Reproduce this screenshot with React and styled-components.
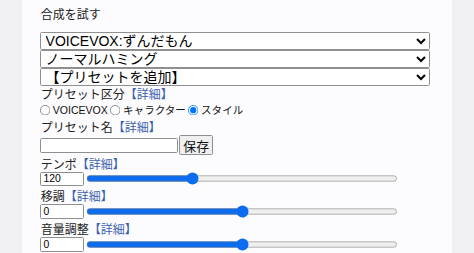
import React, { useState } from "react";
import styled, { createGlobalStyle } from "styled-components";

const Global = createGlobalStyle`
  html, body {
    margin: 0;
    padding: 0;
    background: #f0f0f2;
    font-family: "Noto Sans CJK JP", "Liberation Sans", sans-serif;
  }
`;

// everything below is written at 125% and scaled down, like a zoomed-out page
const Page = styled.div`
  zoom: 0.8;
  display: flex;
  padding: 0 27px;
  height: 320px;
  overflow: hidden;
`;

const Panel = styled.div`
  width: 538px;
  background: #fcfcfe;
  padding: 9px 0 0 23px;
  box-sizing: border-box;
  color: #222;
`;

const Title = styled.div`
  font-size: 15px;
  line-height: 18px;
  padding-left: 1px;
  margin-bottom: 13px;
`;

const Select = styled.select`
  display: block;
  width: 488px;
  height: 22.5px;
  margin: 0;
  font-size: 17.5px;
  font-family: "Liberation Sans", "Noto Sans CJK JP", sans-serif;
  color: #000;
  background: #fff;
  border: 1px solid #8f8f8f;
  border-radius: 2px;
  padding: 0 2px;
`;

const Label = styled.div`
  font-size: 15px;
  line-height: 20px;
  padding-left: 1px;
`;

const Detail = styled.a`
  color: #3c5fae;
  text-decoration: none;
`;

const RadioRow = styled.div`
  display: flex;
  align-items: center;
  gap: 3px;
  font-size: 13.2px;
  font-family: "Liberation Sans", "Noto Sans CJK JP", sans-serif;
  line-height: 21px;
  color: #111;
`;

const RadioLabel = styled.label`
  display: flex;
  align-items: center;
  white-space: nowrap;
  input {
    flex: none;
    margin: 0 2px 0 0;
    width: 14px;
    height: 14px;
  }
`;

const Row = styled.div`
  display: flex;
  align-items: center;
  box-sizing: border-box;
  height: ${(p) => p.$h}px;
  padding-bottom: ${(p) => p.$pb || 0}px;
`;

const TextInput = styled.input`
  width: 173px;
  height: 19px;
  box-sizing: border-box;
  margin: 0;
  border: 1px solid #8f8f8f;
  border-radius: 2px;
  background: #fff;
`;

const Button = styled.button`
  height: 25px;
  margin: 0 0 0 1px;
  padding: 0 4px;
  font-size: 16px;
  font-family: "Noto Sans CJK JP", sans-serif;
  border: 1px solid #8f8f8f;
  border-radius: 2px;
  background: #efefef;
  color: #111;
`;

const NumInput = styled.input`
  width: 55px;
  height: 18px;
  box-sizing: border-box;
  margin: 0;
  padding: 0 3px;
  font-size: 13px;
  font-family: "Liberation Sans", sans-serif;
  border: 1px solid #8f8f8f;
  border-radius: 2px;
  background: #fff;
`;

const Range = styled.input`
  width: 390px;
  margin: 0 0 0 3px;
  accent-color: #0b6cf0;
`;

function Slider({ label, value, min, max }) {
  const [v, setV] = useState(value);
  return (
    <>
      <Label>
        {label}
        <Detail href="#">【詳細】</Detail>
      </Label>
      <Row $h={21} $pb={3}>
        <NumInput type="text" value={v} onChange={(e) => setV(e.target.value)} />
        <Range type="range" min={min} max={max} value={v} onChange={(e) => setV(e.target.value)} />
      </Row>
    </>
  );
}

export default function App() {
  return (
    <>
      <Global />
      <Page>
        <Panel>
          <Title>合成を試す</Title>
          <Select defaultValue="zundamon">
            <option value="zundamon">VOICEVOX:ずんだもん</option>
          </Select>
          <Select defaultValue="normal">
            <option value="normal">ノーマルハミング</option>
          </Select>
          <Select defaultValue="add">
            <option value="add">【プリセットを追加】</option>
          </Select>
          <Label>
            プリセット区分<Detail href="#">【詳細】</Detail>
          </Label>
          <RadioRow>
            <RadioLabel>
              <input type="radio" name="kind" />
              VOICEVOX
            </RadioLabel>
            <RadioLabel>
              <input type="radio" name="kind" />
              キャラクター
            </RadioLabel>
            <RadioLabel>
              <input type="radio" name="kind" defaultChecked />
              スタイル
            </RadioLabel>
          </RadioRow>
          <Label>
            プリセット名<Detail href="#">【詳細】</Detail>
          </Label>
          <Row $h={26}>
            <TextInput type="text" />
            <Button>保存</Button>
          </Row>
          <Slider label="テンポ" value={120} min={60} max={240} />
          <Slider label="移調" value={0} min={-12} max={12} />
          <Slider label="音量調整" value={0} min={-20} max={20} />
        </Panel>
      </Page>
    </>
  );
}
